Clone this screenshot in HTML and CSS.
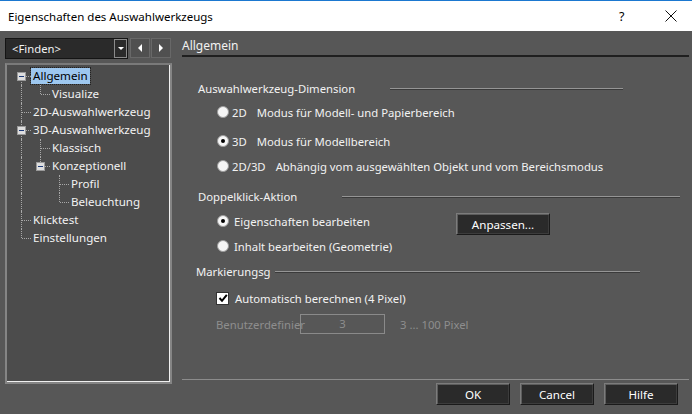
FILE: index.html
```
<!DOCTYPE html>
<html lang="de">
<head>
    <meta charset="UTF-8">
    <meta name="viewport" content="width=device-width, initial-scale=1.0">
    <title>Eigenschaften des Auswahlwerkzeugs</title>
    <link rel="stylesheet" href="styles.css">
</head>
<body>
    <header class="titlebar">
        <span class="title">Eigenschaften des Auswahlwerkzeugs</span>
        <span class="help">?</span>
        <span class="close">
            <svg width="12" height="12" viewBox="0 0 12 12"><path d="M0.5 0.5 L11.5 11.5 M11.5 0.5 L0.5 11.5" stroke="#111" stroke-width="1" fill="none"/></svg>
        </span>
    </header>

    <div class="main">
        <aside class="side">
            <div class="finder">
                <div class="combo">
                    <span class="combo-text">&lt;Finden&gt;</span>
                    <span class="combo-drop"><i class="tri-down"></i></span>
                </div>
                <button class="nav"><i class="tri-left"></i></button>
                <button class="nav"><i class="tri-right"></i></button>
            </div>

            <div class="tree">
                <div class="node"><span class="cell box box-first"><i class="expander"></i></span><span class="label selected">Allgemein</span></div>
                <div class="node"><span class="cell v"></span><span class="cell end"></span><span class="label">Visualize</span></div>
                <div class="node"><span class="cell tee"></span><span class="label">2D-Auswahlwerkzeug</span></div>
                <div class="node"><span class="cell box box-mid"><i class="expander"></i></span><span class="label">3D-Auswahlwerkzeug</span></div>
                <div class="node"><span class="cell v"></span><span class="cell tee"></span><span class="label">Klassisch</span></div>
                <div class="node"><span class="cell v"></span><span class="cell box box-last"><i class="expander"></i></span><span class="label">Konzeptionell</span></div>
                <div class="node"><span class="cell v"></span><span class="cell"></span><span class="cell tee"></span><span class="label">Profil</span></div>
                <div class="node"><span class="cell v"></span><span class="cell"></span><span class="cell end"></span><span class="label">Beleuchtung</span></div>
                <div class="node"><span class="cell tee"></span><span class="label">Klicktest</span></div>
                <div class="node"><span class="cell end"></span><span class="label">Einstellungen</span></div>
            </div>
        </aside>

        <section class="content">
            <div class="page-title">Allgemein</div>

            <div class="group-head g-dim">
                <span class="group-label">Auswahlwerkzeug-Dimension</span>
                <span class="group-line"></span>
            </div>
            <div class="opt opt-1"><span class="radio"></span><span class="mode">2D</span>Modus für Modell- und Papierbereich</div>
            <div class="opt opt-2"><span class="radio checked"></span><span class="mode">3D</span>Modus für Modellbereich</div>
            <div class="opt opt-3"><span class="radio"></span><span class="mode">2D/3D</span>Abhängig vom ausgewählten Objekt und vom Bereichsmodus</div>

            <div class="group-head g-dbl">
                <span class="group-label">Doppelklick-Aktion</span>
                <span class="group-line"></span>
            </div>
            <div class="opt opt-4 wide">
                <span class="radio checked"></span><span class="opt-text">Eigenschaften bearbeiten</span>
                <button class="btn btn-customize">Anpassen...</button>
            </div>
            <div class="opt opt-5 wide"><span class="radio"></span>Inhalt bearbeiten (Geometrie)</div>

            <div class="group-head g-mark">
                <span class="group-label">Markierungsg</span>
                <span class="group-line"></span>
            </div>
            <div class="opt opt-6">
                <span class="check">
                    <svg width="10" height="10" viewBox="0 0 10 10"><path d="M1.5 5 L4 7.8 L8.8 1.8" stroke="#000" stroke-width="2" fill="none"/></svg>
                </span>
                Automatisch berechnen (4 Pixel)
            </div>
            <div class="opt opt-7 disabled">
                <span class="custom-label">Benutzerdefinier</span>
                <span class="num-box">3</span>
                <span class="range">3 ... 100 Pixel</span>
            </div>

            <footer class="footer">
                <button class="btn">OK</button>
                <button class="btn">Cancel</button>
                <button class="btn">Hilfe</button>
            </footer>
        </section>
    </div>
</body>
</html>
```

FILE: styles.css
```
body {
    margin: 0;
    padding: 0;
    width: 692px;
    height: 414px;
    overflow: hidden;
    background-color: #575757;
    font-family: "Noto Sans", "Open Sans", sans-serif;
    font-size: 11.3px;
    color: #f2f2f2;
}
.titlebar {
    height: 30px;
    background-color: #fff;
    border-top: 1px solid #1b78d0;
    display: flex;
    align-items: center;
    color: #000;
}
.title {
    padding-left: 8px;
    flex: 1;
    font-size: 11.5px;
}
.help {
    width: 46px;
    font-size: 12.5px;
}
.close {
    width: 27px;
    display: flex;
    align-items: center;
}

.main {
    display: flex;
    height: 383px;
}
.side {
    width: 167px;
    padding: 7px 0 0 5px;
    margin-right: 10px;
}
.finder {
    display: flex;
    height: 21px;
}
.combo {
    width: 121px;
    display: flex;
    background-color: #2a2a2a;
    border: 1px solid #141414;
}
.combo-text {
    flex: 1;
    padding-left: 6px;
    line-height: 19px;
}
.combo-drop {
    width: 11px;
    border: 1px solid #8a8a8a;
    display: flex;
    align-items: center;
    justify-content: center;
}
.tri-down {
    border-left: 3px solid transparent;
    border-right: 3px solid transparent;
    border-top: 3px solid #fff;
}
.nav {
    width: 20px;
    height: 20px;
    margin: 0 0 0 1px;
    padding: 0;
    background-color: #505050;
    border: 1px solid #686868;
    display: flex;
    align-items: center;
    justify-content: center;
}
.nav:first-of-type {
    margin-left: 2px;
}
.tri-left {
    border-top: 4px solid transparent;
    border-bottom: 4px solid transparent;
    border-right: 4px solid #fff;
}
.tri-right {
    border-top: 4px solid transparent;
    border-bottom: 4px solid transparent;
    border-left: 4px solid #fff;
}

.tree {
    margin-top: 4px;
    height: 315px;
    background-color: #4c4c4c;
    border: 2px solid #858585;
    border-top-color: #7a7a7a;
    box-shadow: inset -1px -1px 0 #f0f0f0;
    padding: 2px 0 0 5px;
    font-size: 11.6px;
}
.node {
    display: flex;
    align-items: center;
    height: 18px;
}
.cell {
    position: relative;
    flex: none;
    width: 19px;
    height: 18px;
}
.cell.v::before,
.cell.tee::before,
.cell.end::before {
    content: "";
    position: absolute;
    left: 9px;
    top: 0;
    bottom: 0;
    border-left: 1px dotted #a8a8a8;
}
.cell.end::before {
    bottom: 9px;
}
.cell.tee::after,
.cell.end::after,
.cell.box::after {
    content: "";
    position: absolute;
    left: 10px;
    top: 9px;
    width: 9px;
    border-top: 1px dotted #a8a8a8;
}
.cell.box::after {
    left: 14px;
    width: 5px;
}
.cell.box::before {
    content: "";
    position: absolute;
    left: 9px;
    top: 0;
    bottom: 0;
    border-left: 1px dotted #a8a8a8;
}
.cell.box-first::before {
    top: 13px;
}
.cell.box-last::before {
    bottom: 13px;
}
.expander {
    position: absolute;
    left: 5px;
    top: 5px;
    width: 7px;
    height: 7px;
    background-color: #dedede;
    border: 1px solid #9a9a9a;
    z-index: 1;
}
.expander::after {
    content: "";
    position: absolute;
    left: 1px;
    top: 3px;
    width: 5px;
    height: 1px;
    background-color: #1c3a78;
}
.label {
    padding: 0 2px;
    line-height: 16px;
    white-space: nowrap;
}
.label.selected {
    background-color: #9dc7ef;
    color: #000;
    outline: 1px dotted #222;
}

.content {
    flex: 1;
    display: flex;
    flex-direction: column;
    padding-right: 3px;
}
.page-title {
    margin-top: 6px;
    height: 18px;
    line-height: 18px;
    font-size: 12px;
    border-bottom: 2px solid #1f1f1f;
}
.group-head {
    display: flex;
    align-items: center;
    height: 18px;
    padding-left: 16px;
}
.group-label {
    white-space: nowrap;
}
.group-line {
    height: 0;
    border-top: 1px solid #959595;
    border-bottom: 1px solid #3a3a3a;
    margin-top: 2px;
}
.g-dim {
    margin-top: 22px;
}
.g-dim .group-label { width: 192px; }
.g-dim .group-line { width: 233px; }
.g-dbl {
    margin-top: 12px;
}
.g-dbl .group-label { width: 144px; }
.g-dbl .group-line { width: 338px; }
.g-mark {
    margin-top: 7px;
    padding-left: 14px;
}
.g-mark .group-label { width: 79px; }
.g-mark .group-line { width: 365px; }

.opt {
    display: flex;
    align-items: center;
    height: 18px;
    padding-left: 35px;
    white-space: nowrap;
}
.opt-1 { margin-top: 6px; }
.opt-2 { margin-top: 11px; }
.opt-3 { margin-top: 7px; }
.opt-4 { margin-top: 7px; align-items: flex-start; }
.opt-4 .radio, .opt-4 .opt-text { margin-top: 3px; }
.opt-4 .opt-text { line-height: 14px; }
.opt-5 { margin-top: 7px; }
.opt-6 { margin-top: 9px; padding-left: 34px; }
.opt-7 { margin-top: 8px; padding-left: 34px; }
.radio {
    flex: none;
    width: 10px;
    height: 10px;
    border-radius: 50%;
    background-color: #f6f6f6;
    border: 1px solid #9c9c9c;
    margin-right: 3px;
    display: flex;
    align-items: center;
    justify-content: center;
}
.wide .radio {
    margin-right: 5px;
}
.radio.checked::after {
    content: "";
    width: 4px;
    height: 4px;
    border-radius: 50%;
    background-color: #000;
}
.mode {
    margin-right: 10px;
}
.opt-text {
    width: 222px;
}
.btn {
    width: 74px;
    height: 22px;
    padding: 0;
    font-family: inherit;
    font-size: 11.6px;
    color: #fff;
    background-color: #2a2a2a;
    border: 1px solid;
    border-color: #7c7c7c #1a1a1a #1a1a1a #7c7c7c;
    box-shadow: inset 1px 1px 0 #5c5c5c, inset -1px -1px 0 #3c3c3c;
}
.btn-customize {
    width: 94px;
    margin-top: 1px;
}
.check {
    flex: none;
    width: 11px;
    height: 11px;
    background-color: #fff;
    border: 1px solid #333;
    margin-right: 6px;
    display: flex;
    align-items: center;
    justify-content: center;
}
.disabled {
    color: #8e8e8e;
}
.custom-label {
    width: 84px;
}
.num-box {
    width: 83px;
    height: 18px;
    line-height: 18px;
    text-align: center;
    border: 1px solid #8a8a8a;
    margin-right: 15px;
}
.footer {
    margin-top: auto;
    border-top: 1px solid #8c8c8c;
    box-shadow: 0 1px 0 #4a4a4a;
    padding: 3px 11px 9px 0;
    display: flex;
    justify-content: flex-end;
    gap: 10px;
}
```
